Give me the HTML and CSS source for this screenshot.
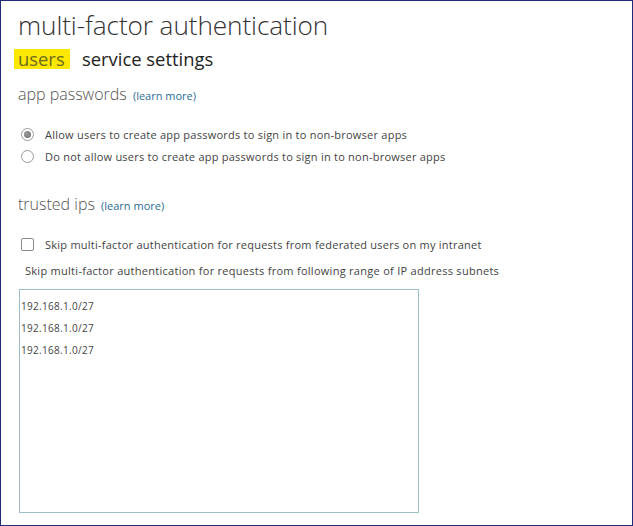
FILE: index.html
```html
<!DOCTYPE html>
<html>
<head>
<meta charset="utf-8">
<link rel="stylesheet" href="styles.css">
</head>
<body>
<div class="frame">
  <h1 class="title">multi-factor authentication</h1>
  <nav class="tabs">
    <span class="tab tab-active">users</span>
    <span class="tab">service settings</span>
  </nav>
  <section class="section section-app">
    <h2 class="heading">app passwords <a class="learn">(learn more)</a></h2>
    <div class="options">
      <div class="option"><span class="radio radio-checked"></span><span>Allow users to create app passwords to sign in to non-browser apps</span></div>
      <div class="option"><span class="radio"></span><span>Do not allow users to create app passwords to sign in to non-browser apps</span></div>
    </div>
  </section>
  <section class="section section-ips">
    <h2 class="heading">trusted ips <a class="learn">(learn more)</a></h2>
    <div class="option option-check"><span class="checkbox"></span><span>Skip multi-factor authentication for requests from federated users on my intranet</span></div>
    <p class="note">Skip multi-factor authentication for requests from following range of IP address subnets</p>
    <div class="ipbox">
      <div class="ip">192.168.1.0/27</div>
      <div class="ip">192.168.1.0/27</div>
      <div class="ip">192.168.1.0/27</div>
    </div>
  </section>
</div>
</body>
</html>
```
FILE: styles.css
```css
* { box-sizing: border-box; }
html, body { margin: 0; padding: 0; background: #fff; }
body { font-family: "Open Sans", "Noto Sans", sans-serif; color: #444; }
.frame {
  width: 633px;
  height: 526px;
  border: 1px solid #1f2a78;
  padding: 6px 0 0 17px;
  overflow: hidden;
}
.title {
  margin: 0;
  font-size: 26.2px;
  font-weight: 300;
  line-height: 36px;
  color: #333;
  letter-spacing: -0.1px;
}
.tabs {
  display: flex;
  align-items: center;
  margin: 6px 0 0 -4px;
  gap: 8px;
}
.tab {
  font-size: 18.4px;
  line-height: 20px;
  padding: 0 4px;
  color: #222;
  height: 20px;
}
.tab-active {
  background: #ffe800;
  color: #6b6a1c;
  width: 56px;
}
.heading {
  margin: 0;
  font-size: 16px;
  font-weight: 300;
  line-height: 22px;
  color: #555;
}
.learn {
  font-size: 11px;
  font-weight: 400;
  color: #2a6d99;
  text-decoration: none;
  margin-left: 2px;
}
.section-app { margin-top: 14px; }
.options {
  display: flex;
  flex-direction: column;
  gap: 7px;
  margin-top: 20px;
}
.option {
  display: flex;
  align-items: center;
  font-size: 11px;
  line-height: 15px;
  color: #444;
  letter-spacing: 0.24px;
}
.radio {
  width: 13px;
  height: 13px;
  border: 1px solid #9a9a9a;
  border-radius: 50%;
  margin: 0 11px 0 3px;
  display: flex;
  align-items: center;
  justify-content: center;
  background: #fff;
}
.radio-checked::after {
  content: "";
  width: 7px;
  height: 7px;
  border-radius: 50%;
  background: radial-gradient(circle at 40% 40%, #9a9a9a, #6e6e6e);
}
.section-ips { margin-top: 29px; }
.option-check { margin-top: 20px; }
.checkbox {
  width: 13px;
  height: 13px;
  border: 1px solid #8a8a8a;
  border-radius: 2px;
  margin: 0 11px 0 3px;
}
.note {
  margin: 11px 0 0 7px;
  font-size: 11px;
  line-height: 15px;
  color: #444;
  letter-spacing: 0.28px;
}
.ipbox {
  margin: 11px 0 0 1px;
  width: 400px;
  height: 224px;
  border: 1px solid #9dbdc8;
  padding-top: 5px;
}
.ip {
  font-size: 10px;
  line-height: 22px;
  color: #444;
  padding-left: 1px;
  letter-spacing: 0.3px;
}
```
